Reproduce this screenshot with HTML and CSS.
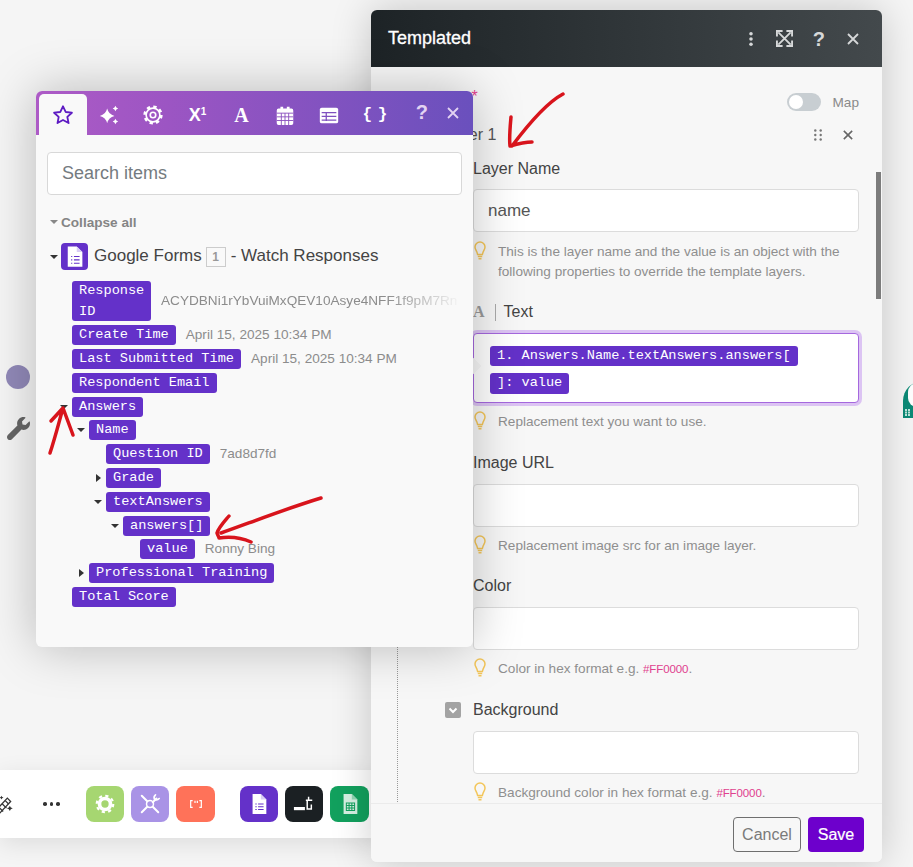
FILE: index.html
```html
<!DOCTYPE html>
<html lang="en">
<head>
<meta charset="utf-8">
<title>Templated</title>
<link rel="stylesheet" href="styles.css">
</head>
<body>
<main class="canvas">
  <div class="node-dot"></div>
  <svg class="node-wrench" viewBox="0 0 512 512"><path d="M507.73 109.1c-2.24-9.03-13.54-12.09-20.12-5.51l-74.36 74.36-67.88-11.31-11.31-67.88 74.36-74.36c6.62-6.62 3.43-17.9-5.66-20.16-47.38-11.74-99.55.91-136.58 37.93-39.64 39.64-50.55 97.1-34.05 147.2L18.74 402.76c-24.99 24.99-24.99 65.51 0 90.5 24.99 24.99 65.51 24.99 90.5 0l213.21-213.21c50.12 16.71 107.47 5.68 147.37-34.22 37.07-37.07 49.7-89.32 37.91-136.73z"/></svg>
  <div class="node-teal"><span class="teal-hole"></span><svg class="teal-grid" viewBox="0 0 5 7"><path d="M0 0h2v2H0zM3 0h2v2H3zM0 2.500h2v2H0zM3 2.500h2v2H3zM0 5h2v2H0zM3 5h2v2H3z" fill="#bfe6dc"/></svg></div>

  <nav class="toolbar">
    <svg class="wand" viewBox="0 0 24 24"><path d="M2 20 16 5l4 4L6 24z" fill="none" stroke="#333" stroke-width="1.500"/><path d="M6 16l5 5M10 12l5 5M13.500 8l4 4" stroke="#333" stroke-width="1.500"/><path d="M19 14q.6 2.600 3.500 3-2.900.6-3.500 3.500-.6-2.900-3.500-3.500 2.900-.4 3.500-3zM9 2q.4 1.800 2.400 2.300Q9.400 4.800 9 6.700 8.600 4.800 6.600 4.300 8.600 3.800 9 2z" fill="#333"/></svg>
    <span class="more"><i></i><i></i><i></i></span>
    <span class="tool tool-green"><svg viewBox="0 0 24 24"><circle cx="12" cy="12" r="6" fill="none" stroke="#fff" stroke-width="4"/><circle cx="12" cy="12" r="9" fill="none" stroke="#fff" stroke-width="2.400" stroke-dasharray="3.500 3.570"/></svg></span>
    <span class="tool tool-lilac"><svg viewBox="0 0 24 24" fill="none" stroke="#fff" stroke-width="2.200" stroke-linecap="round"><path d="M3 3l6 6M15 15l6 6M19 6l-4 4M9 15l-6 6"/><circle cx="12" cy="12" r="3.800" stroke-width="1.600"/><path d="M22 6a4 4 0 0 1-5 1M18 2a4 4 0 0 0-1 5" stroke-width="1.800"/></svg></span>
    <span class="tool tool-coral"><svg viewBox="0 0 24 24" fill="none" stroke="#fff" stroke-width="1.800"><path d="M7 7H4v10h3M17 7h3v10h-3M10.500 7v3.500M14 7v3.500"/></svg></span>
    <span class="tool tool-forms tool-gap"><svg viewBox="0 0 24 24"><path d="M5 1h9l6 6v16H5z" fill="#fff"/><path d="M14 1l6 6h-6z" fill="#d9cdf5"/><path d="M8 12h1.500M11 12h6M8 15h1.500M11 15h6M8 18h1.500M11 18h6" stroke="#6431c9" stroke-width="1.300"/></svg></span>
    <span class="tool tool-dark"><svg viewBox="0 0 24 24" fill="none" stroke="#fff" stroke-width="2"><path d="M1 17h12" stroke-width="3.500"/><path d="M17 4v4h-3M17 8h4M15.500 8v9.500h4.500v-5" stroke-width="1.600"/></svg></span>
    <span class="tool tool-sheets"><svg viewBox="0 0 24 24"><path d="M5 1h9l6 6v16H5z" fill="#d5f0e2"/><path d="M14 1l6 6h-6z" fill="#8fd6b2"/><path d="M8 11h9v8H8zM8 13.700h9M8 16.300h9M11 11v8M14 11v8" fill="none" stroke="#12a15e" stroke-width="1.100"/></svg></span>
  </nav>

  <section class="dialog">
    <header class="dialog-head">
      <h1 class="dialog-title">Templated</h1>
      <div class="dialog-actions">
        <svg class="ic-kebab" viewBox="0 0 6 18"><circle cx="3" cy="3" r="2"/><circle cx="3" cy="9" r="2"/><circle cx="3" cy="15" r="2"/></svg>
        <svg class="ic-expand" viewBox="0 0 18 18" fill="none" stroke="#d6d8d9" stroke-width="2"><path d="M2.500 2.500l13 13M15.500 2.500l-13 13"/><path d="M1 7V1h6M11 1h6v6M17 11v6h-6M7 17H1v-6" stroke-width="2"/></svg>
        <span class="ic-help">?</span>
        <svg class="ic-close" viewBox="0 0 12 12"><path d="M1 1l10 10M11 1L1 11"/></svg>
      </div>
    </header>
    <div class="dialog-body">
      <div class="layers-row">
        <span class="layers-label">Layers <span class="req">*</span></span>
        <span class="map-toggle"><span class="toggle"><span class="knob"></span></span><span class="map-text">Map</span></span>
      </div>
      <div class="layer">
        <div class="layer-head">
          <span class="layer-title">Layer 1</span>
          <span class="layer-tools">
            <svg class="ic-grip" viewBox="0 0 8 12"><circle cx="1.300" cy="1.500" r="1.200"/><circle cx="6.700" cy="1.500" r="1.200"/><circle cx="1.300" cy="6" r="1.200"/><circle cx="6.700" cy="6" r="1.200"/><circle cx="1.300" cy="10.500" r="1.200"/><circle cx="6.700" cy="10.500" r="1.200"/></svg>
            <svg class="ic-x-small" viewBox="0 0 12 12"><path d="M1 1l10 10M11 1L1 11"/></svg>
          </span>
        </div>
        <div class="fields">
          <div class="field field-first">
            <label class="field-label">Layer Name</label>
            <div class="input input-value">name</div>
            <div class="hint"><svg class="bulb" viewBox="0 0 12 19"><use href="#bulb"/></svg><p>This is the layer name and the value is an object with the following properties to override the template layers.</p></div>
          </div>
          <div class="field">
            <label class="field-label"><span class="type-a">A</span><span class="type-sep"></span>Text</label>
            <div class="textbox">
              <span class="pill">1. Answers.Name.textAnswers.answers[</span>
              <span class="pill pill-tall">]: value</span>
            </div>
            <div class="hint"><svg class="bulb" viewBox="0 0 12 19"><use href="#bulb"/></svg><p>Replacement text you want to use.</p></div>
          </div>
          <div class="field">
            <label class="field-label">Image URL</label>
            <div class="input"></div>
            <div class="hint"><svg class="bulb" viewBox="0 0 12 19"><use href="#bulb"/></svg><p>Replacement image src for an image layer.</p></div>
          </div>
          <div class="field">
            <label class="field-label">Color</label>
            <div class="input"></div>
            <div class="hint"><svg class="bulb" viewBox="0 0 12 19"><use href="#bulb"/></svg><p>Color in hex format e.g. <code class="hex">#FF0000</code>.</p></div>
          </div>
          <div class="field">
            <label class="field-label"><span class="check"><svg viewBox="0 0 16 16"><path d="M4.500 6.500 8 10l3.500-3.500" fill="none" stroke="#fff" stroke-width="2"/></svg></span>Background</label>
            <div class="input"></div>
            <div class="hint"><svg class="bulb" viewBox="0 0 12 19"><use href="#bulb"/></svg><p>Background color in hex format e.g. <code class="hex">#FF0000</code>.</p></div>
          </div>
        </div>
      </div>
      <div class="scrollbar"></div>
    </div>
    <footer class="dialog-foot">
      <button class="btn btn-cancel">Cancel</button>
      <button class="btn btn-save">Save</button>
    </footer>
  </section>

  <section class="picker">
    <header class="picker-head">
      <div class="tabs">
        <span class="tab tab-active"><svg viewBox="0 0 24 24" class="ic-star"><path d="M12 2.500l2.900 6.200 6.800.8-5 4.600 1.400 6.700-6.100-3.400-6 3.400 1.300-6.700-5-4.600 6.800-.8z"/></svg></span>
        <span class="tab"><svg viewBox="0 0 24 24" class="ic-spark"><path d="M10 5Q11.500 11.500 18 13 11.500 14.500 10 21 8.500 14.500 2 13 8.500 11.500 10 5zM19 2q.6 2.400 3 3-2.400.6-3 3-.6-2.400-3-3 2.400-.6 3-3zM19 16q.6 2.400 3 3-2.400.6-3 3-.6-2.400-3-3 2.400-.6 3-3z"/></svg></span>
        <span class="tab"><svg viewBox="0 0 24 24" class="ic-gear"><circle cx="12" cy="12" r="3"/><circle cx="12" cy="12" r="7.500"/><circle cx="12" cy="12" r="9" class="teeth"/></svg></span>
        <span class="tab tab-text tab-x">X<sup class="tab-sup">1</sup></span>
        <span class="tab tab-text">A</span>
        <span class="tab"><svg viewBox="0 0 24 24" class="ic-cal"><path d="M3 7a2 2 0 0 1 2-2h2V3h3v2h4V3h3v2h2a2 2 0 0 1 2 2v14a2 2 0 0 1-2 2H5a2 2 0 0 1-2-2z" fill="#fff"/><path d="M3 10h18M3 14h18M3 18h18M8 10v13M12 10v13M16 10v13" stroke="#8b51be" stroke-width="1"/></svg></span>
        <span class="tab"><svg viewBox="0 0 24 24" class="ic-table"><rect x="2" y="4" width="20" height="17" rx="2" fill="#fff"/><path d="M4 9.500h16M4 13.500h16M4 17.500h16M9 9.500v9" stroke="#7f50bf" stroke-width="1.400"/></svg></span>
        <span class="tab tab-braces">{ }</span>
      </div>
      <div class="picker-actions">
        <span class="picker-help">?</span>
        <svg class="picker-close" viewBox="0 0 12 12"><path d="M1 1l10 10M11 1L1 11"/></svg>
      </div>
    </header>
    <div class="picker-body">
      <div class="search">Search items</div>
      <div class="collapse"><span class="caret caret-grey"></span>Collapse all</div>
      <div class="module">
        <span class="caret"></span>
        <span class="module-icon"><svg viewBox="0 0 24 24"><path d="M6 3h8l5 5v13H6z" fill="#fff"/><path d="M14 3l5 5h-5z" fill="#d9cdf5"/><path d="M9 12h1M11.500 12h5M9 15h1M11.500 15h5M9 18h1M11.500 18h5" stroke="#6431c9" stroke-width="1.100"/></svg></span>
        <span class="module-name">Google Forms</span>
        <span class="module-count">1</span>
        <span class="module-name">- Watch Responses</span>
      </div>
      <div class="tree">
        <div class="row"><span class="pill pill-wrap">Response ID</span><span class="val val-fade">ACYDBNi1rYbVuiMxQEV10Asye4NFF1f9pM7Rn</span></div>
        <div class="row"><span class="pill">Create Time</span><span class="val">April 15, 2025 10:34 PM</span></div>
        <div class="row"><span class="pill">Last Submitted Time</span><span class="val">April 15, 2025 10:34 PM</span></div>
        <div class="row"><span class="pill">Respondent Email</span></div>
        <div class="row"><span class="caret tree-caret"></span><span class="pill">Answers</span></div>
        <div class="kids kids-tight">
          <div class="row"><span class="caret tree-caret"></span><span class="pill">Name</span></div>
          <div class="kids">
            <div class="row"><span class="pill">Question ID</span><span class="val">7ad8d7fd</span></div>
            <div class="row"><span class="caret caret-right tree-caret"></span><span class="pill">Grade</span></div>
            <div class="row"><span class="caret tree-caret"></span><span class="pill">textAnswers</span></div>
            <div class="kids">
              <div class="row"><span class="caret tree-caret"></span><span class="pill">answers[]</span></div>
              <div class="kids kids-tight">
                <div class="row"><span class="pill">value</span><span class="val">Ronny Bing</span></div>
              </div>
            </div>
          </div>
          <div class="row"><span class="caret caret-right tree-caret"></span><span class="pill">Professional Training</span></div>
        </div>
        <div class="row"><span class="pill">Total Score</span></div>
      </div>
    </div>
  </section>

  <svg class="marks" viewBox="0 0 913 867">
    <path d="M563 94C548 102 530 122 512 146M511 117C510 128 509 138 510 146 517 144 525 142 532 142"/>
    <path d="M50 453C55 438 59 422 63 408M51 421 63 408 73 435"/>
    <path d="M321 498C288 508 252 522 221 533M229 516C224 522 219 527 217 533 218 536 219 537 219 538 232 536 242 538 251 542"/>
  </svg>

  <svg class="defs" aria-hidden="true"><symbol id="bulb" viewBox="0 0 12 19"><path d="M6 1a5 5 0 0 0-5 5c0 2.800 2 3.800 2.600 7.500h4.800C9 9.800 11 8.800 11 6a5 5 0 0 0-5-5zM3.800 15.500h4.400M4.500 17.800h3" fill="none" stroke="#f3c65a" stroke-width="1.500"/></symbol></svg>
</main>
</body>
</html>
```
FILE: styles.css
```css
* { box-sizing: border-box; }
html, body { margin: 0; padding: 0; }
body { font-family: "Liberation Sans", Arial, sans-serif; color: #333; background: #f5f5f5; }
.canvas { position: relative; width: 913px; height: 867px; overflow: hidden; background: #f5f5f5; }
.defs { position: absolute; width: 0; height: 0; }

/* scenario canvas items */
.node-dot { position: absolute; left: 6px; top: 365px; width: 24px; height: 24px; border-radius: 50%; background: #9189b8; }
.node-wrench { position: absolute; left: 7px; top: 417px; width: 23px; height: 23px; fill: #666; }
.node-teal { position: absolute; left: 903px; top: 381px; width: 40px; height: 37px; border-radius: 20px 20px 0 0; background: #0c8a76; }
.teal-hole { display: block; width: 18px; height: 24px; margin: 2px 0 0 5px; border-radius: 9px; background: #fff; }
.teal-grid { display: block; width: 5px; height: 7px; margin: 2px 0 0 2px; }

.toolbar { position: absolute; left: 0; top: 770px; width: 380px; height: 68px; display: flex; align-items: center; background: #fff; box-shadow: 0 6px 24px rgba(0,0,0,.1); }
.wand { width: 20px; height: 20px; margin-left: -6px; flex: none; }
.more { display: flex; gap: 3px; margin-left: 29px; margin-right: 26.500px; }
.more i { width: 3.500px; height: 3.500px; border-radius: 50%; background: #333; }
.tool { width: 38px; height: 36px; border-radius: 8px; margin-right: 7px; display: flex; align-items: center; justify-content: center; flex: none; }
.tool svg { width: 22px; height: 22px; }
.tool-green { background: #a6d671; }
.tool-lilac { background: #a993e6; }
.tool-coral { background: #ff7259; width: 39px; }
.tool-coral svg { width: 16px; height: 16px; }
.tool-forms { background: #6431c9; }
.tool-gap { margin-left: 18px; }
.tool-dark { background: #1b2023; }
.tool-sheets { background: #12a15e; width: 39px; }

/* main dialog */
.dialog { position: absolute; left: 371px; top: 10px; width: 511px; height: 852px; display: flex; flex-direction: column; border-radius: 6px; background: #f7f7f7; box-shadow: 0 0 40px rgba(0,0,0,.2); overflow: hidden; }
.dialog-head { height: 57px; flex: none; display: flex; align-items: center; justify-content: space-between; padding: 0 23px 0 17px; background: linear-gradient(90deg, #1d2326, #43494c); }
.dialog-title { margin: 0; font-size: 18px; font-weight: 400; color: #fff; -webkit-text-stroke: .3px #fff; }
.dialog-actions { display: flex; align-items: center; }
.ic-kebab { width: 6px; height: 16px; fill: #d6d8d9; margin-right: 22px; }
.ic-expand { width: 17px; height: 17px; margin-right: 20px; }
.ic-help { font-size: 20px; font-weight: 700; color: #d6d8d9; margin-right: 22px; line-height: 20px; }
.ic-close { width: 12px; height: 12px; fill: none; stroke: #d6d8d9; stroke-width: 1.800; }

.dialog-body { position: relative; flex: 1; min-height: 0; overflow: hidden; padding: 26px 23px 0 26px; }
.scrollbar { position: absolute; right: 1px; top: 105px; width: 5px; height: 127px; background: #7c7c7c; }
.layers-row { display: flex; align-items: center; justify-content: space-between; height: 18px; padding-left: 22px; }
.layers-label { font-size: 16px; }
.req { color: #e6428f; position: relative; top: -5px; }
.map-toggle { display: flex; align-items: center; gap: 12px; }
.toggle { display: block; width: 34px; height: 18px; border-radius: 9px; padding: 2px; background: #c8ced2; }
.knob { display: block; width: 14px; height: 14px; border-radius: 50%; background: #fff; }
.map-text { font-size: 13.600px; color: #8a8a8a; }

.layer { margin-top: 13px; border-left: 1px dotted #9a9a9a; padding-left: 48px; padding-bottom: 40px; }
.layer-head { display: flex; align-items: center; justify-content: space-between; height: 22px; padding-right: 6px; }
.layer-title { font-size: 16px; color: #555; margin-left: -3px; }
.layer-tools { display: flex; align-items: center; gap: 21px; }
.ic-grip { width: 8px; height: 12px; fill: #777; }
.ic-x-small { width: 10px; height: 10px; fill: none; stroke: #666; stroke-width: 1.900; }
.fields { padding-left: 27px; padding-top: 10px; display: flex; flex-direction: column; gap: 19.500px; }
.field-first { margin-bottom: -.5px; }
.field-first .hint { margin-top: 9px; }
.field-first .field-label { padding-top: 4px; }
.field-label { display: flex; align-items: center; height: 22px; padding-top: 2px; margin-bottom: 11px; font-size: 16px; color: #444; }
.input { height: 43px; border: 1px solid #dcdcdc; border-radius: 4px; background: #fff; }
.input-value { padding-left: 14px; font-size: 17px; line-height: 42px; color: #555; }
.hint { display: flex; gap: 12px; margin-top: 8px; font-size: 13.600px; line-height: 20px; color: #8f8f8f; }
.hint p { margin: 0 0 -1px; padding-top: 1px; }
.bulb { width: 12px; height: 19px; margin-left: 1px; flex: none; }
.hex { font-family: "Liberation Sans", Arial, sans-serif; font-size: 11.500px; letter-spacing: -.1px; color: #e0418e; }
.type-a { font-family: "Liberation Serif", serif; font-weight: 700; font-size: 16px; color: #9a9a9a; }
.type-sep { width: 1px; height: 17px; background: #aaa; margin: 0 8px 0 10px; }
.check { width: 16px; height: 16px; border-radius: 2px; background: #a3a3a3; margin-left: -28px; margin-right: 12px; flex: none; }
.check svg { display: block; width: 16px; height: 16px; }

.textbox { position: relative; height: 70px; display: flex; flex-direction: column; align-items: flex-start; gap: 7px; padding: 12px 16px; border: 1px solid #a568de; border-radius: 4px; background: #fff; box-shadow: 0 0 0 3px #dcc4f3; }
.textbox::before { content: ""; position: absolute; left: -7px; top: 26px; width: 12px; height: 12px; background: #f9f9f9; transform: rotate(45deg); border-radius: 1px; }

.pill { display: inline-block; flex: none; padding: 0 7px; height: 20px; line-height: 20px; border-radius: 3px; background: #6431c9; color: #fff; font-family: "Liberation Mono", "Courier New", monospace; font-size: 13.600px; white-space: pre; }
.pill-tall { height: 21px; }

.dialog-foot { height: 59px; flex: none; display: flex; justify-content: flex-end; gap: 7px; padding: 13px 18px 0 0; border-top: 1px solid #ebebeb; background: #f7f7f7; }
.btn { height: 35px; border-radius: 4px; font-family: "Liberation Sans", Arial, sans-serif; font-size: 16px; padding: 0; }
.btn-cancel { width: 68px; border: 1px solid #6f6f6f; background: #f7f7f7; color: #7a7a7a; }
.btn-save { width: 56px; border: 0; background: #6d00cc; color: #fff; -webkit-text-stroke: .2px #fff; }

/* mapping picker */
.picker { position: absolute; left: 36px; top: 91px; width: 437px; height: 556px; border-radius: 6px; background: #f9f9f9; box-shadow: 0 0 50px rgba(0,0,0,.25); overflow: hidden; }
.picker-head { height: 44px; display: flex; align-items: flex-end; justify-content: space-between; padding: 0 14px 0 3px; background: linear-gradient(90deg, #ad5bc6 0%, #9c55c3 30%, #6a50bd 100%); }
.tabs { display: flex; align-items: flex-end; }
.tab { width: 44px; height: 41px; display: flex; align-items: center; justify-content: center; color: #fff; }
.tab svg { width: 22px; height: 22px; }
.tab-active { width: 48px; background: #f9f9f9; border-radius: 5px 5px 0 0; }
.ic-star { fill: none; stroke: #5e1cc3; stroke-width: 2; stroke-linejoin: round; }
.ic-spark { fill: #fff; }
.ic-gear { fill: none; stroke: #fff; stroke-width: 1.800; }
.ic-gear .teeth { stroke-width: 3; stroke-dasharray: 3.600 3.470; }
.tab-text { font-family: "Liberation Serif", serif; font-weight: 700; font-size: 20px; padding-top: 2px; padding-left: 1px; }
.tab-x { font-family: "Liberation Sans", sans-serif; font-size: 18px; }
.tab-sup { font-size: 10px; line-height: 0; margin-top: -7px; font-family: "Liberation Sans", sans-serif; }
.tab-braces { font-family: "Liberation Mono", monospace; font-weight: 700; font-size: 16px; letter-spacing: -2px; padding-left: 2px; }
.picker-actions { display: flex; align-items: center; gap: 19px; height: 41px; padding-bottom: 4px; }
.picker-help { font-size: 20px; font-weight: 700; color: #e3d3f2; }
.picker-close { width: 12px; height: 12px; fill: none; stroke: #e3d3f2; stroke-width: 1.800; }

.picker-body { padding: 17px 11px 0; }
.search { height: 43px; line-height: 41px; padding-left: 14px; border: 1px solid #d8d8d8; border-radius: 4px; background: #fff; font-size: 18px; color: #747b80; }
.collapse { display: flex; align-items: center; height: 16px; margin-top: 19px; padding-left: 3px; font-size: 13.600px; font-weight: 700; color: #858585; }
.collapse .caret { margin-right: 3px; }
.caret { display: block; width: 0; height: 0; flex: none; border-style: solid; border-width: 4px 4px 0; border-color: #333 transparent transparent; }
.caret-grey { border-top-color: #888; }
.caret-right { border-width: 4px 0 4px 5px; border-color: transparent transparent transparent #333; }
.module { display: flex; align-items: center; height: 27px; margin-top: 13px; padding-left: 3px; }
.module-icon { width: 27px; height: 27px; margin-left: 3px; margin-right: 6px; border-radius: 4px; background: #6431c9; flex: none; }
.module-icon svg { display: block; width: 27px; height: 27px; }
.module-name { font-size: 17px; color: #444; white-space: nowrap; margin-bottom: 2px; }
.module-count { width: 20px; height: 20px; margin: 0 5px 0 4px; border: 1px solid #ccc; text-align: center; font-size: 12px; line-height: 18px; font-weight: 700; color: #999; }

.tree { margin: 11px 0 0 25px; }
.row { display: flex; align-items: center; margin-bottom: 4px; }
.kids { padding-left: 17px; }
.kids-tight { margin-top: -1px; }
.tree-caret { margin-left: -12px; margin-right: 4px; }
.caret-right.tree-caret { margin-left: -10px; margin-right: 5px; }
.pill-wrap { width: 79px; height: 40px; line-height: 20.500px; white-space: normal; }
.val { margin-left: 10px; margin-bottom: 2px; font-size: 13.600px; color: #8c8c8c; white-space: nowrap; }
.val-fade { width: 310px; overflow: hidden; -webkit-mask-image: linear-gradient(90deg, #000 75%, transparent 100%); mask-image: linear-gradient(90deg, #000 75%, transparent 100%); }

.marks { position: absolute; left: 0; top: 0; width: 913px; height: 867px; fill: none; stroke: #d8141c; stroke-width: 3.500; stroke-linecap: round; stroke-linejoin: round; pointer-events: none; }
```
